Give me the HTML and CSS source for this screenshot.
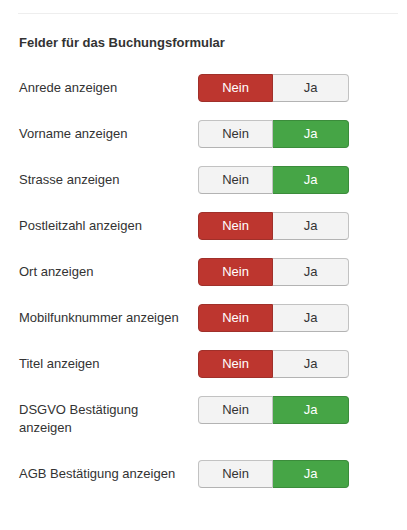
FILE: index.html
```html
<!DOCTYPE html>
<html lang="de">
<head>
<meta charset="utf-8">
<title>Felder für das Buchungsformular</title>
<link rel="stylesheet" href="styles.css">
</head>
<body>
<div class="panel">
  <hr class="divider">
  <h4 class="section-title">Felder für das Buchungsformular</h4>

  <div class="control-group">
    <div class="control-label"><label>Anrede anzeigen</label></div>
    <div class="controls"><div class="btn-group"><span class="btn btn-nein active-no">Nein</span><span class="btn btn-ja">Ja</span></div></div>
  </div>
  <div class="control-group">
    <div class="control-label"><label>Vorname anzeigen</label></div>
    <div class="controls"><div class="btn-group"><span class="btn btn-nein">Nein</span><span class="btn btn-ja active-yes">Ja</span></div></div>
  </div>
  <div class="control-group">
    <div class="control-label"><label>Strasse anzeigen</label></div>
    <div class="controls"><div class="btn-group"><span class="btn btn-nein">Nein</span><span class="btn btn-ja active-yes">Ja</span></div></div>
  </div>
  <div class="control-group">
    <div class="control-label"><label>Postleitzahl anzeigen</label></div>
    <div class="controls"><div class="btn-group"><span class="btn btn-nein active-no">Nein</span><span class="btn btn-ja">Ja</span></div></div>
  </div>
  <div class="control-group">
    <div class="control-label"><label>Ort anzeigen</label></div>
    <div class="controls"><div class="btn-group"><span class="btn btn-nein active-no">Nein</span><span class="btn btn-ja">Ja</span></div></div>
  </div>
  <div class="control-group">
    <div class="control-label"><label>Mobilfunknummer anzeigen</label></div>
    <div class="controls"><div class="btn-group"><span class="btn btn-nein active-no">Nein</span><span class="btn btn-ja">Ja</span></div></div>
  </div>
  <div class="control-group">
    <div class="control-label"><label>Titel anzeigen</label></div>
    <div class="controls"><div class="btn-group"><span class="btn btn-nein active-no">Nein</span><span class="btn btn-ja">Ja</span></div></div>
  </div>
  <div class="control-group">
    <div class="control-label"><label>DSGVO Bestätigung anzeigen</label></div>
    <div class="controls"><div class="btn-group"><span class="btn btn-nein">Nein</span><span class="btn btn-ja active-yes">Ja</span></div></div>
  </div>
  <div class="control-group">
    <div class="control-label"><label>AGB Bestätigung anzeigen</label></div>
    <div class="controls"><div class="btn-group"><span class="btn btn-nein">Nein</span><span class="btn btn-ja active-yes">Ja</span></div></div>
  </div>
</div>
</body>
</html>
```
FILE: styles.css
```css
html, body {
  margin: 0;
  padding: 0;
  background: #fff;
}
body {
  font-family: "Liberation Sans", Arial, sans-serif;
  font-size: 13px;
  line-height: 18px;
  color: #333;
}
.panel {
  margin-left: 18px;
  width: 380px;
}
.divider {
  margin: 13px 0 0;
  border: 0;
  border-top: 1px solid #eee;
  height: 0;
}
.section-title {
  margin: 20px 0 22px 1px;
  font-size: 13px;
  line-height: 18px;
  font-weight: bold;
}
.control-group {
  display: flex;
  align-items: flex-start;
  margin-bottom: 18px;
}
.control-label {
  width: 168px;
  padding-top: 5px;
  padding-left: 1px;
  box-sizing: border-box;
}
.control-label label {
  display: block;
  margin-bottom: 5px;
}
.controls {
  margin-left: 12px;
}
.btn-group {
  display: flex;
}
.btn {
  display: block;
  box-sizing: border-box;
  height: 28px;
  padding: 4px 0;
  text-align: center;
  background: #f3f3f3;
  border: 1px solid #c2c2c2;
  border-bottom-color: #b3b3b3;
  color: #333;
}
.btn-nein {
  width: 75px;
  border-radius: 4px 0 0 4px;
}
.btn-ja {
  width: 76px;
  border-left: 0;
  border-radius: 0 4px 4px 0;
}
.active-no {
  background: #bd362f;
  border-color: #a0302a;
  color: #fff;
}
.active-yes {
  background: #46a546;
  border-color: #3b8c3b;
  color: #fff;
}
```
